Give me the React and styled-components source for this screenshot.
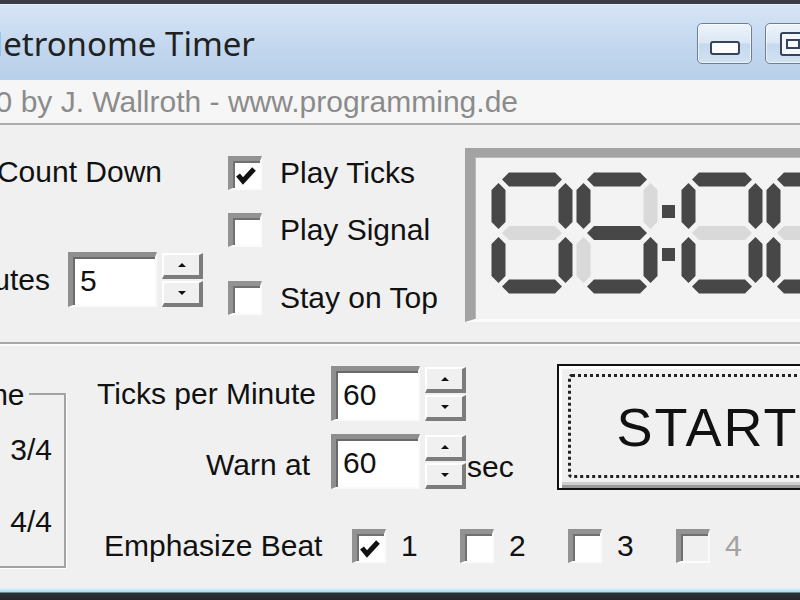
import React from "react";
import styled, { createGlobalStyle } from "styled-components";

const GlobalStyle = createGlobalStyle`
  html, body {
    margin: 0;
    padding: 0;
    background: #f0f0f0;
    overflow: hidden;
  }
`;

const Window = styled.div`
  width: 800px;
  height: 600px;
  overflow: hidden;
  display: flex;
  flex-direction: column;
  background: #f0f0f0;
  color: #111;
  font-family: "Liberation Sans", Arial, sans-serif;
  font-size: 30px;
  line-height: 34px;
`;

const FrameTop = styled.div`
  height: 4px;
  background: #3a3e44;
  border-bottom: 1px solid #e6eef8;
`;

const TitleBar = styled.div`
  height: 75px;
  display: flex;
  justify-content: space-between;
  background: linear-gradient(#d5e4f5, #c3d8ef 55%, #b8cfe9);
`;

// right-aligned box: text that runs past its left edge is cut by the window
const Clip = styled.div`
  width: ${(p) => p.$w}px;
  flex: none;
  display: flex;
  justify-content: flex-end;
  white-space: nowrap;
`;

const TitleText = styled(Clip)`
  font-family: "Noto Sans", "Liberation Sans", sans-serif;
  font-size: 33px;
  color: #222;
  align-self: center;
  margin-top: 2px;
`;

const Caption = styled.div`
  display: flex;
  gap: 13px;
  margin-top: 18px;
  margin-right: -20px;
`;

const CaptionButton = styled.div`
  width: 55px;
  height: 41px;
  box-sizing: border-box;
  border: 1px solid #6a7f9c;
  border-radius: 5px;
  background: linear-gradient(#eef4fb, #dbe7f4 48%, #c6d8ed 52%, #d3e2f2);
  box-shadow: inset 0 0 0 1px rgba(255, 255, 255, 0.6);
  display: flex;
  justify-content: center;
  align-items: ${(p) => (p.$max ? "center" : "flex-end")};
  padding-bottom: ${(p) => (p.$max ? 0 : 8)}px;
`;

const MinGlyph = styled.div`
  width: 30px;
  height: 14px;
  box-sizing: border-box;
  border: 2px solid #34445a;
  border-radius: 3px;
  background: #fbfdff;
`;

const MaxGlyph = styled.div`
  width: 26px;
  height: 24px;
  box-sizing: border-box;
  border: 2px solid #34445a;
  border-radius: 3px;
  background: #f4f8fc;
  display: flex;
  align-items: center;
  justify-content: center;

  &::after {
    content: "";
    width: 10px;
    height: 6px;
    border: 2px solid #34445a;
  }
`;

const InfoStrip = styled.div`
  height: 43px;
  display: flex;
  align-items: center;
  background: #f6f6f6;
  border-bottom: 2px solid #ababab;
  color: #8b8b8b;
  font-size: 30px;
`;

const TopSection = styled.div`
  height: 217px;
  display: grid;
  grid-template-columns: 228px 237px 1fr;
  align-items: start;
`;

const LeftColumn = styled.div`
  display: flex;
  flex-direction: column;
  padding-top: 30px;
`;

const SpinRow = styled.div`
  display: flex;
  align-items: center;
  margin-top: ${(p) => p.$top || 0}px;
`;

const NumberField = styled.div`
  width: 89px;
  height: 55px;
  box-sizing: border-box;
  margin-left: ${(p) => p.$gap}px;
  background: #fff;
  border-top: 5px solid #8f8f8f;
  border-left: 5px solid #8f8f8f;
  border-right: 2px solid #fafafa;
  border-bottom: 2px solid #fafafa;
  box-shadow: inset 2px 2px 0 #6a6a6a;
  padding-left: 7px;
  display: flex;
  align-items: center;
`;

const Spinner = styled.div`
  display: flex;
  flex-direction: column;
  gap: 2px;
  margin-left: 5px;
`;

const SpinButton = styled.div`
  width: 41px;
  height: 26px;
  box-sizing: border-box;
  background: #f0f0f0;
  border-top: 2px solid #ffffff;
  border-left: 2px solid #ffffff;
  border-right: 4px solid #7c7c7c;
  border-bottom: 4px solid #7c7c7c;
  display: flex;
  align-items: center;
  justify-content: center;

  &::after {
    content: "";
    border-left: 4px solid transparent;
    border-right: 4px solid transparent;
    ${(p) => (p.$down ? "border-top" : "border-bottom")}: 4px solid #111;
  }
`;

const CheckList = styled.div`
  display: flex;
  flex-direction: column;
`;

const CheckRow = styled.div`
  display: flex;
  align-items: center;
  gap: 18px;
  height: 35px;
  margin-top: ${(p) => p.$top || 0}px;
  color: ${(p) => (p.$disabled ? "#a3a3a3" : "inherit")};
`;

const Box = styled.span`
  width: 34px;
  height: 34px;
  flex: none;
  box-sizing: border-box;
  background: ${(p) => (p.$disabled ? "#f0f0f0" : "#fff")};
  border-top: 5px solid #939393;
  border-left: 5px solid #939393;
  border-right: 2px solid #fbfbfb;
  border-bottom: 2px solid #fbfbfb;
  box-shadow: inset 2px 2px 0 #707070;
  display: flex;
`;

const CheckBox = ({ checked, disabled }) => (
  <Box $disabled={disabled}>
    {checked && (
      <svg width="27" height="27" viewBox="0 0 27 27">
        <polyline
          points="5,14 10,20 21,8"
          fill="none"
          stroke="#111"
          strokeWidth="5"
        />
      </svg>
    )}
  </Box>
);

const Lcd = styled.div`
  margin-top: 23px;
  width: 400px;
  height: 174px;
  box-sizing: border-box;
  border-top: 9px solid #a3a3a3;
  border-left: 10px solid #a3a3a3;
  border-bottom: 3px solid #fcfcfc;
  box-shadow: inset 1px 1px 0 #b8b8b8;
  background: #f3f3f3;
  padding: 15px 0 0 16px;
  display: flex;
  align-items: flex-start;
`;

const ON = "#474747";
const OFF = "#d9d9d9";

const h = (c, x1, x2) =>
  `${x1},${c} ${x1 + 7},${c - 7} ${x2 - 7},${c - 7} ${x2},${c} ${x2 - 7},${c + 7} ${x1 + 7},${c + 7}`;
const v = (c, y1, y2) =>
  `${c},${y1} ${c + 7},${y1 + 7} ${c + 7},${y2 - 7} ${c},${y2} ${c - 7},${y2 - 7} ${c - 7},${y1 + 7}`;

const SEGMENTS = {
  a: h(7.5, 11, 71),
  b: v(74.5, 11, 57),
  c: v(74.5, 65, 111),
  d: h(114.5, 11, 71),
  e: v(7.5, 65, 111),
  f: v(7.5, 11, 57),
  g: h(61, 11, 71),
};

const DIGITS = {
  0: "abcdef",
  1: "bc",
  2: "abdeg",
  3: "abcdg",
  4: "bcfg",
  5: "acdfg",
  6: "acdefg",
  7: "abc",
  8: "abcdefg",
  9: "abcdfg",
};

const DigitSvg = styled.svg`
  flex: none;
  margin-right: ${(p) => p.$gap || 0}px;
`;

const Digit = ({ value, gap }) => (
  <DigitSvg width="82" height="122" viewBox="0 0 82 122" $gap={gap}>
    {Object.entries(SEGMENTS).map(([key, pts]) => (
      <polygon
        key={key}
        points={pts}
        fill={DIGITS[value].includes(key) ? ON : OFF}
      />
    ))}
  </DigitSvg>
);

const Colon = () => (
  <DigitSvg width="23" height="122" viewBox="0 0 23 122">
    <rect x="4" y="33" width="13" height="13" fill={ON} />
    <rect x="4" y="76" width="13" height="13" fill={ON} />
  </DigitSvg>
);

const Separator = styled.div`
  border-top: 2px solid #a8a8a8;
  border-bottom: 2px solid #fcfcfc;
`;

const BottomSection = styled.div`
  flex: 1;
  display: flex;
  align-items: flex-start;
`;

const GroupBox = styled.fieldset`
  margin: 29px 0 0 -100px;
  padding: 0;
  width: 166px;
  height: 193px;
  flex: none;
  box-sizing: border-box;
  border: 2px solid #a3a3a3;
  box-shadow: 1px 1px 0 #fff;
  min-width: 0;
`;

const Legend = styled.legend`
  margin-left: 53px;
  padding: 3px 4px 0;
`;

const RadioList = styled.div`
  display: flex;
  flex-direction: column;
  align-items: flex-end;
  padding: 21px 12px 0 0;
  gap: 38px;
`;

const RadioRow = styled.div`
  display: flex;
  align-items: center;
  gap: 10px;
`;

const Radio = styled.span`
  width: 26px;
  height: 26px;
  border-radius: 50%;
  background: #fff;
  border: 3px solid #8c8c8c;
  box-sizing: border-box;
`;

const RightPane = styled.div`
  display: flex;
  flex-direction: column;
`;

const ControlRow = styled.div`
  display: flex;
  align-items: flex-start;
`;

const Controls = styled.div`
  width: 491px;
  display: flex;
  flex-direction: column;
  padding-top: 20px;
  gap: 13px;
`;

const FieldLabel = styled.span`
  width: 250px;
  box-sizing: border-box;
  text-align: right;
  padding-right: ${(p) => p.$pad || 0}px;
  margin-top: ${(p) => p.$drop || 0}px;
`;

const Unit = styled.span`
  margin: 10px 0 0 1px;
`;

const StartButton = styled.button`
  margin-top: 18px;
  width: 302px;
  height: 126px;
  flex: none;
  box-sizing: border-box;
  padding: 0;
  background: #f0f0f0;
  border: 2px solid #111;
  box-shadow: inset 3px 3px 0 #fff, inset -3px -3px 0 #9a9a9a,
    inset -6px -6px 0 #cfcfcf;
  display: flex;
  cursor: pointer;
  font-family: "Liberation Sans", Arial, sans-serif;
  font-size: 54px;
  letter-spacing: 2px;
  color: #111;
`;

const FocusRing = styled.span`
  flex: 1;
  margin: 8px 10px 10px 9px;
  border: 3px dotted #222;
  border-radius: 4px;
  display: flex;
  align-items: center;
  justify-content: center;
  padding-top: 2px;
`;

const BeatRow = styled.div`
  margin-top: 38px;
  padding-left: 38px;
  display: flex;
  align-items: center;
`;

const BeatLabel = styled.span`
  width: 248px;
`;

const BeatItem = styled(CheckRow)`
  width: 108px;
  gap: 15px;
`;

const FrameBottom = styled.div`
  height: 12px;
  background: linear-gradient(#e2f4fb 0, #a6dbf0 4px, #2c3034 5px, #24282c 12px);
`;

export default function App() {
  return (
    <Window>
      <GlobalStyle />
      <FrameTop />
      <TitleBar>
        <TitleText $w={255}>Metronome Timer</TitleText>
        <Caption>
          <CaptionButton>
            <MinGlyph />
          </CaptionButton>
          <CaptionButton $max>
            <MaxGlyph />
          </CaptionButton>
        </Caption>
      </TitleBar>
      <InfoStrip>
        <Clip $w={518}>Version 1.0 by J. Wallroth - www.programming.de</Clip>
      </InfoStrip>

      <TopSection>
        <LeftColumn>
          <Clip $w={162}>Count Down</Clip>
          <SpinRow $top={63}>
            <Clip $w={50}>Minutes</Clip>
            <NumberField $gap={18}>5</NumberField>
            <Spinner>
              <SpinButton />
              <SpinButton $down />
            </Spinner>
          </SpinRow>
        </LeftColumn>

        <CheckList>
          <CheckRow $top={30}>
            <CheckBox checked />
            Play Ticks
          </CheckRow>
          <CheckRow $top={22}>
            <CheckBox />
            Play Signal
          </CheckRow>
          <CheckRow $top={33}>
            <CheckBox />
            Stay on Top
          </CheckRow>
        </CheckList>

        <Lcd>
          <Digit value={0} gap={3} />
          <Digit value={5} />
          <Colon />
          <Digit value={0} gap={3} />
          <Digit value={0} />
        </Lcd>
      </TopSection>

      <Separator />

      <BottomSection>
        <GroupBox>
          <Legend>Time</Legend>
          <RadioList>
            <RadioRow>
              <Radio />
              3/4
            </RadioRow>
            <RadioRow>
              <Radio />
              4/4
            </RadioRow>
          </RadioList>
        </GroupBox>

        <RightPane>
          <ControlRow>
            <Controls>
              <SpinRow>
                <FieldLabel>Ticks per Minute</FieldLabel>
                <NumberField $gap={15}>60</NumberField>
                <Spinner>
                  <SpinButton />
                  <SpinButton $down />
                </Spinner>
              </SpinRow>
              <SpinRow>
                <FieldLabel $pad={6} $drop={6}>
                  Warn at
                </FieldLabel>
                <NumberField $gap={15}>60</NumberField>
                <Spinner>
                  <SpinButton />
                  <SpinButton $down />
                </Spinner>
                <Unit>sec</Unit>
              </SpinRow>
            </Controls>

            <StartButton>
              <FocusRing>START</FocusRing>
            </StartButton>
          </ControlRow>

          <BeatRow>
            <BeatLabel>Emphasize Beat</BeatLabel>
            <BeatItem>
              <CheckBox checked />1
            </BeatItem>
            <BeatItem>
              <CheckBox />2
            </BeatItem>
            <BeatItem>
              <CheckBox />3
            </BeatItem>
            <BeatItem $disabled>
              <CheckBox disabled />4
            </BeatItem>
          </BeatRow>
        </RightPane>
      </BottomSection>

      <FrameBottom />
    </Window>
  );
}
